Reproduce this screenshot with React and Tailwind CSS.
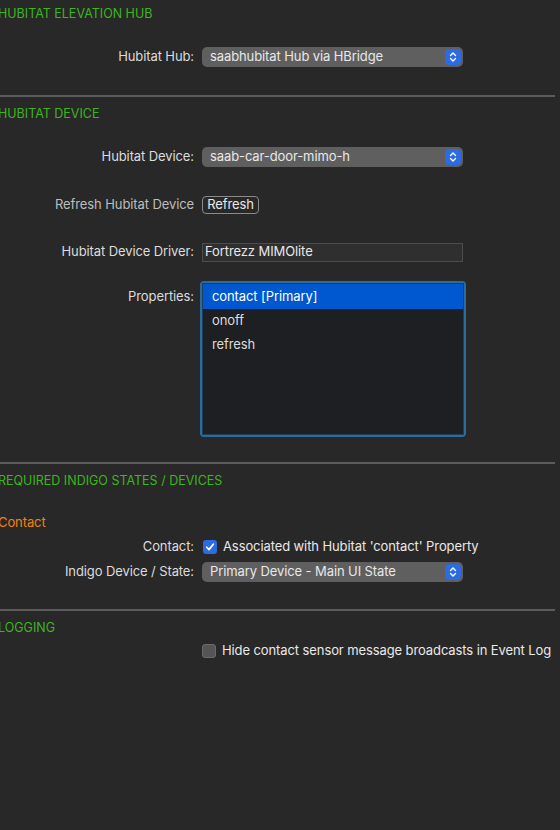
import React from "react";

const font = { fontFamily: "Inter, 'Noto Sans', 'Liberation Sans', sans-serif" };

function Stepper() {
  return (
    <span className="flex h-[16px] w-[16px] items-center justify-center rounded-[4px] bg-[#2c6be0]">
      <svg width="8" height="12" viewBox="0 0 8 12" fill="none">
        <path d="M1.5 4.5 L4 2 L6.5 4.5" stroke="white" strokeWidth="1.4" strokeLinecap="round" strokeLinejoin="round" />
        <path d="M1.5 7.5 L4 10 L6.5 7.5" stroke="white" strokeWidth="1.4" strokeLinecap="round" strokeLinejoin="round" />
      </svg>
    </span>
  );
}

function Popup({ value }) {
  return (
    <div className="flex h-[20px] w-[261px] items-center justify-between rounded-[5px] bg-[#5f5f5f] pl-[8px] pr-[2px] text-[13px] text-[#e8e8e8]">
      <span>{value}</span>
      <Stepper />
    </div>
  );
}

function Row({ label, height, children, dim }) {
  return (
    <div className="flex items-center" style={{ height }}>
      <div className={`w-[195px] pr-[1px] text-right text-[13px] ${dim ? "text-[#bdbdbd]" : "text-[#dcdcdc]"}`}>
        {label}
      </div>
      <div className="pl-[7px]">{children}</div>
    </div>
  );
}

function Header({ children }) {
  return (
    <div className="-ml-[2px] text-[12.5px] leading-none tracking-normal text-[#3db51c]">{children}</div>
  );
}

function Check({ checked }) {
  if (checked) {
    return (
      <span className="flex h-[14px] w-[14px] items-center justify-center rounded-[3px] bg-[#2c6be0]">
        <svg width="10" height="10" viewBox="0 0 10 10" fill="none">
          <path d="M1.8 5.2 L4 7.6 L8.3 2.2" stroke="white" strokeWidth="1.7" strokeLinecap="round" strokeLinejoin="round" />
        </svg>
      </span>
    );
  }
  return <span className="block h-[14px] w-[14px] rounded-[3px] border border-[#6a6a6a] bg-[#555555]" />;
}

function Divider() {
  return <div className="h-[2px] w-[555px] bg-[#5c5c5c]" />;
}

export default function App() {
  return (
    <div className="h-[830px] w-[560px] overflow-hidden bg-[#282828] tracking-[-0.1px]" style={font}>
      {/* Hub */}
      <div className="flex h-[29px] items-center">
        <Header>HUBITAT ELEVATION HUB</Header>
      </div>
      <div className="h-[14px]" />
      <Row label="Hubitat Hub:" height={28}>
        <Popup value="saabhubitat Hub via HBridge" />
      </Row>
      <div className="h-[24px]" />
      <Divider />

      {/* Device */}
      <div className="flex h-[34px] items-center">
        <Header>HUBITAT DEVICE</Header>
      </div>
      <div className="h-[8px]" />
      <Row label="Hubitat Device:" height={36}>
        <Popup value="saab-car-door-mimo-h" />
      </Row>
      <div className="h-[18px]" />
      <Row label="Refresh Hubitat Device" height={24} dim>
        <button className="flex h-[18px] w-[57px] items-center justify-center rounded-[4px] border border-[#8a8a8a] text-[13px] text-[#e8e8e8]">
          Refresh
        </button>
      </Row>
      <div className="h-[23px]" />
      <Row label="Hubitat Device Driver:" height={24}>
        <div className="flex h-[19px] w-[261px] items-center border border-[#4c4c4c] bg-[#2f2f2f] px-[2px] text-[13px] text-[#e8e8e8]">
          Fortrezz MIMOlite
        </div>
      </Row>

      {/* Properties list */}
      <div className="mt-[17px] flex">
        <div className="w-[195px] pr-[1px] pt-[6px] text-right text-[13px] text-[#dcdcdc]">Properties:</div>
        <div className="ml-[5px] h-[156px] w-[266px] rounded-[4px] bg-[#2b6c9c] p-[2px]">
          <div className="h-full w-full border border-[#1f3f58] bg-[#1e1f22]">
            <div className="flex h-[25px] items-center bg-[#0058d0] pl-[9px] text-[13px] text-white">contact [Primary]</div>
            <div className="flex h-[24px] items-center pl-[9px] text-[13px] text-[#dcdcdc]">onoff</div>
            <div className="flex h-[24px] items-center pl-[9px] text-[13px] text-[#dcdcdc]">refresh</div>
          </div>
        </div>
      </div>
      <div className="h-[25px]" />
      <Divider />

      {/* Required states */}
      <div className="flex h-[34px] items-center">
        <Header>REQUIRED INDIGO STATES / DEVICES</Header>
      </div>
      <div className="h-[13px]" />
      <div className="flex h-[24px] items-center">
        <div className="-ml-[2px] text-[13px] text-[#f0820f]">Contact</div>
      </div>
      <Row label="Contact:" height={24}>
        <label className="flex items-center gap-[6px] text-[13px] text-[#e8e8e8]">
          <span className="ml-[1px]"><Check checked /></span>
          Associated with Hubitat 'contact' Property
        </label>
      </Row>
      <Row label="Indigo Device / State:" height={26}>
        <Popup value="Primary Device - Main UI State" />
      </Row>
      <div className="h-[24px]" />
      <Divider />

      {/* Logging */}
      <div className="flex h-[34px] items-center">
        <Header>LOGGING</Header>
      </div>
      <Row label="" height={12}>
        <label className="flex items-center gap-[6px] text-[13px] text-[#e8e8e8]">
          <Check />
          Hide contact sensor message broadcasts in Event Log
        </label>
      </Row>
    </div>
  );
}
